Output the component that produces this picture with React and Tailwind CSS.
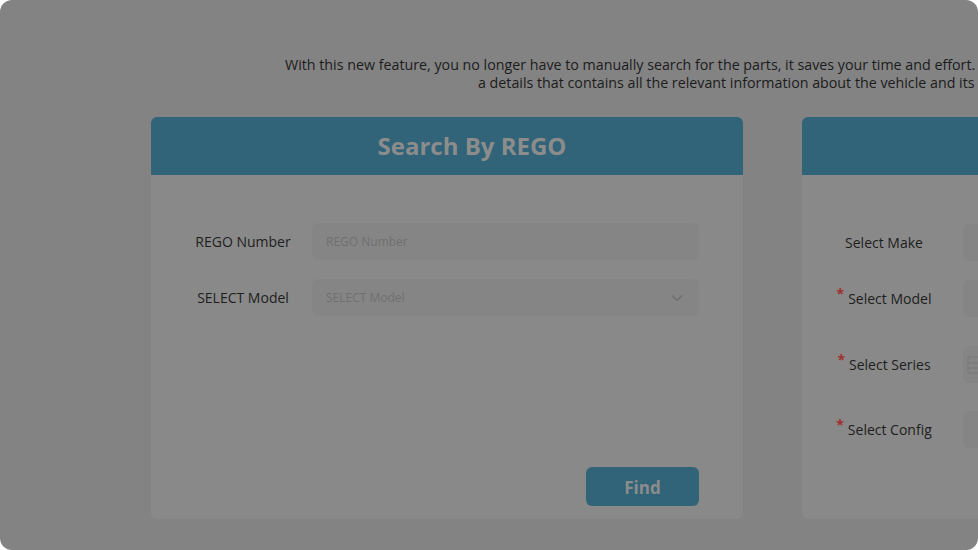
import React from "react";

const font = { fontFamily: '"Open Sans", "Noto Sans", sans-serif' };

function Chevron() {
  return (
    <svg width="12" height="8" viewBox="0 0 12 8" className="shrink-0">
      <path d="M1 1.5 L6 6.5 L11 1.5" fill="none" stroke="#6c6c6c" strokeWidth="1.2" />
    </svg>
  );
}

function Field({ placeholder, select }) {
  return (
    <div className="w-[387px] h-[37px] rounded-[6px] bg-[#858585] flex items-center justify-between pl-[14px] pr-[16px] text-[12px] text-[#707070]">
      <span>{placeholder}</span>
      {select && <Chevron />}
    </div>
  );
}

function CardHeader({ title }) {
  return (
    <div className="h-[58px] bg-[#316478] flex items-center justify-center pl-[50px] text-[24px] font-bold text-[#8c8c8c] shrink-0">
      {title}
    </div>
  );
}

function RequiredLabel({ children, required }) {
  return (
    <div className="w-[120px] text-center text-[14px] text-[#1e1e1e] ml-[22px] shrink-0">
      {required && (
        <span className="relative top-[-5px] mr-[4px] text-[#a03030] text-[14px] font-bold leading-none">*</span>
      )}
      {children}
    </div>
  );
}

function MakeBox({ icon }) {
  return (
    <div className="ml-[19px] w-[420px] h-[37px] rounded-[6px] bg-[#858585] flex items-center pl-[4px] shrink-0">
      {icon && (
        <svg width="16" height="20" viewBox="0 0 16 20">
          <rect x="1" y="2" width="14" height="16" rx="2" fill="none" stroke="#7c7c7c" strokeWidth="1.5" />
          <line x1="1" y1="8" x2="15" y2="8" stroke="#7c7c7c" strokeWidth="1.5" />
          <line x1="1" y1="13" x2="15" y2="13" stroke="#7c7c7c" strokeWidth="1.5" />
        </svg>
      )}
    </div>
  );
}

export default function App() {
  return (
    <div className="bg-white w-[978px] h-[550px]" style={font}>
      <div className="h-full rounded-[12px] bg-[#838383] overflow-hidden">
        <div className="w-[1545px]">
          <div className="pt-[56px] text-[14.25px] leading-[18px] text-[#1c1c1c]">
            <p className="ml-[285px] whitespace-nowrap">
              With this new feature, you no longer have to manually search for the parts, it saves your time and effort. Simply enter the REGO number to get
            </p>
            <p className="ml-[478px] whitespace-nowrap">
              a details that contains all the relevant information about the vehicle and its parts.
            </p>
          </div>

          <div className="mt-[25px] flex gap-[59px] pl-[151px]">
            {/* Search by REGO */}
            <div className="w-[592px] h-[402px] rounded-[6px] bg-[#898989] overflow-hidden flex flex-col">
              <CardHeader title="Search By REGO" />
              <div className="flex-1 flex flex-col pt-[48px]">
                <div className="flex items-center">
                  <div className="w-[106px] ml-[39px] mr-[16px] text-center text-[14px] text-[#1e1e1e]">
                    REGO Number
                  </div>
                  <Field placeholder="REGO Number" />
                </div>
                <div className="flex items-center mt-[19px]">
                  <div className="w-[106px] ml-[39px] mr-[16px] text-center text-[14px] text-[#1e1e1e]">
                    SELECT Model
                  </div>
                  <Field placeholder="SELECT Model" select />
                </div>
                <div className="mt-auto mb-[13px] flex justify-end pr-[44px]">
                  <button className="w-[113px] h-[39px] pt-[2px] rounded-[6px] bg-[#316478] text-[17px] font-bold text-[#8c8c8c]">
                    Find
                  </button>
                </div>
              </div>
            </div>

            {/* Search by Make */}
            <div className="w-[592px] h-[402px] rounded-[6px] bg-[#898989] overflow-hidden flex flex-col">
              <CardHeader title="Search By Make" />
              <div className="flex-1 flex flex-col pt-[49px]">
                <div className="flex items-center">
                  <RequiredLabel>Select Make</RequiredLabel>
                  <MakeBox />
                </div>
                <div className="flex items-center mt-[19px]">
                  <RequiredLabel required>Select Model</RequiredLabel>
                  <MakeBox />
                </div>
                <div className="flex items-center mt-[29px]">
                  <RequiredLabel required>Select Series</RequiredLabel>
                  <MakeBox icon />
                </div>
                <div className="flex items-center mt-[28px]">
                  <RequiredLabel required>Select Config</RequiredLabel>
                  <MakeBox />
                </div>
              </div>
            </div>
          </div>
        </div>
      </div>
    </div>
  );
}
